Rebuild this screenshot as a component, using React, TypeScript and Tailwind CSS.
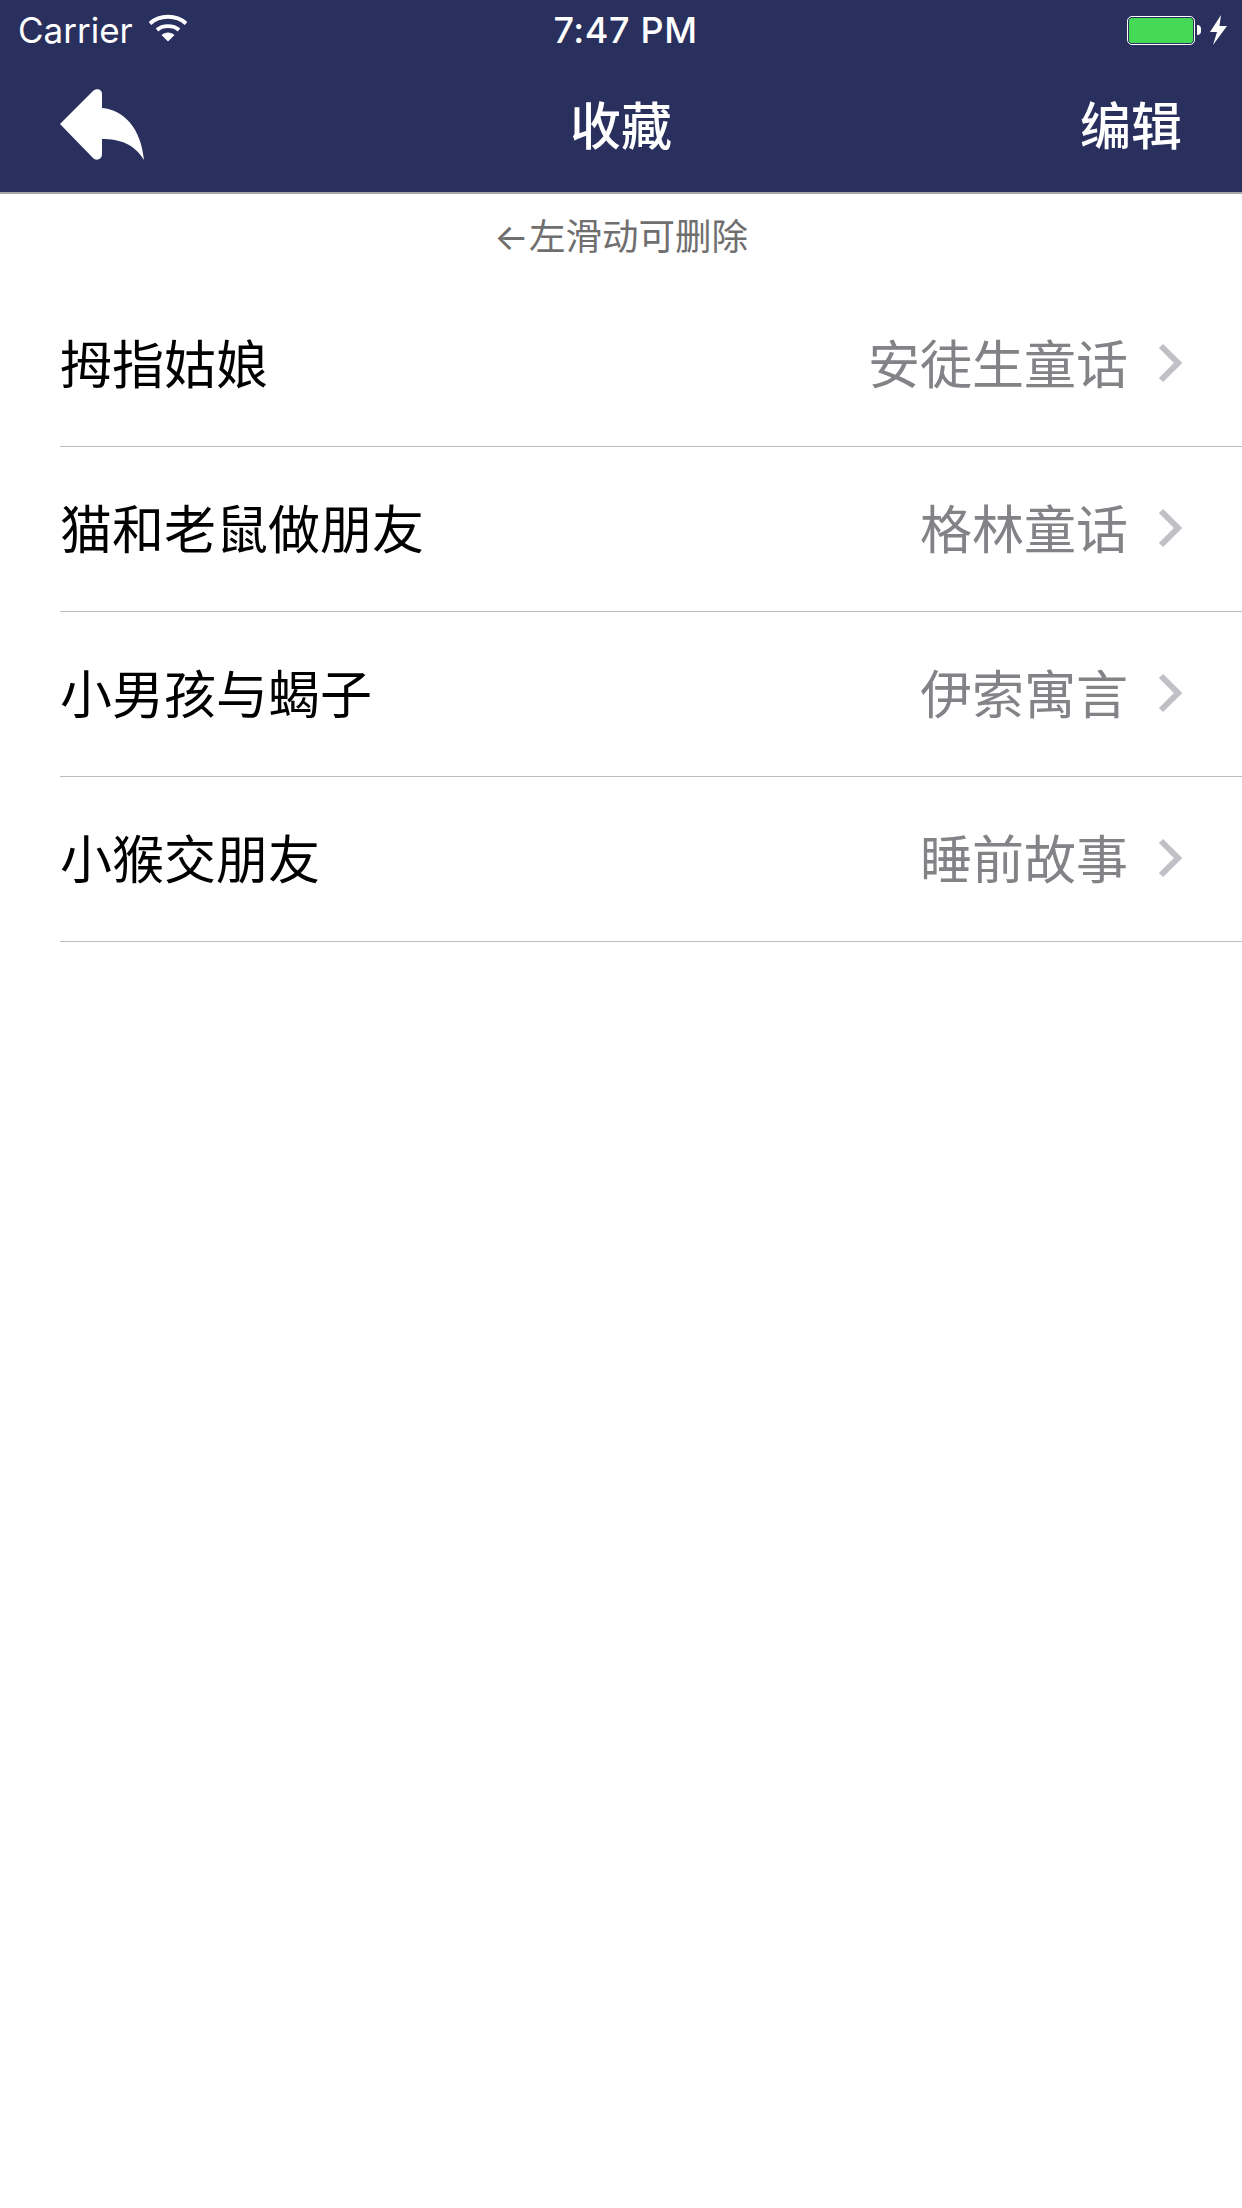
import React from 'react';

const favorites = [
  { title: '拇指姑娘', category: '安徒生童话' },
  { title: '猫和老鼠做朋友', category: '格林童话' },
  { title: '小男孩与蝎子', category: '伊索寓言' },
  { title: '小猴交朋友', category: '睡前故事' },
];

const font = "font-['Inter','Noto_Sans_CJK_SC',sans-serif]";

function StatusBar() {
  return (
    <div className="flex h-[60px] items-center justify-between pl-[18px] pr-[14px] text-white">
      <div className="flex w-[300px] items-center gap-[16px]">
        <span className="text-[35px] leading-none">Carrier</span>
        {/* wifi */}
        <svg width="38" height="28" viewBox="0 0 38 28" className="mb-[5px]">
          <path d="M1 9.5C10.5 0.5 27.5 0.5 37 9.5" fill="none" stroke="white" strokeWidth="3.8" />
          <path d="M8 16C13.5 10.8 24.5 10.8 30 16" fill="none" stroke="white" strokeWidth="3.8" />
          <path d="M12.5 21C16 17.5 22 17.5 25.5 21L19 27.5Z" fill="white" />
        </svg>
      </div>
      <span className="ml-[5px] text-[36px] font-medium leading-none tracking-[0.6px]">7:47 PM</span>
      <div className="flex w-[300px] items-center justify-end">
        <div className="flex h-[29px] w-[68px] items-center justify-center rounded-[5px] border border-white">
          <div className="h-[25px] w-[64px] rounded-[3px] bg-[#44d957]" />
        </div>
        <div className="ml-[2px] h-[10px] w-[4px] rounded-r-[4px] bg-white" />
        {/* charging bolt */}
        <svg width="18" height="30" viewBox="0 0 18 30" className="ml-[9px]">
          <path d="M11 0L0 17H7L3 30L17 11H9.5Z" fill="white" />
        </svg>
      </div>
    </div>
  );
}

function NavBar() {
  return (
    <div className="flex h-[132px] items-center justify-between pl-[60px] pr-[60px] text-white">
      <div className="w-[200px]">
        <svg width="85" height="72" viewBox="0 0 85 72" className="mb-[3px] block">
          <path
            d="M0 35L33 2C36 -1 42 -0.5 42 5V19C64 21 81 39 84 71C74 55 60 50 42 50V65C42 71 36 72 33 69Z"
            fill="white"
          />
        </svg>
      </div>
      <span className="text-[51px] font-medium leading-none">收藏</span>
      <span className="w-[200px] text-right text-[51px] font-medium leading-none">编辑</span>
    </div>
  );
}

function Row({ title, category }: { title: string; category: string }) {
  return (
    <div className="ml-[60px] flex h-[165px] items-center justify-between border-b border-[#bcbbc1] pr-[60px]">
      <span className="pt-[3px] text-[52px] leading-none text-black">{title}</span>
      <div className="flex items-center">
        <span className="pt-[3px] text-[52px] leading-none text-[#828287]">{category}</span>
        <svg width="24" height="40" viewBox="0 0 24 40" className="ml-[30px] mb-[2px]">
          <path d="M3 3L20 20L3 37" fill="none" stroke="#c0c0c6" strokeWidth="6" />
        </svg>
      </div>
    </div>
  );
}

export default function App() {
  return (
    <div className={`h-[2208px] w-[1242px] bg-white ${font}`}>
      <div className="border-b-2 border-[#a8a8ac] bg-[#2a305e]">
        <StatusBar />
        <NavBar />
      </div>
      <div className="flex h-[88px] items-center justify-center pb-[2px] text-[36.5px] leading-none text-[#6f6f6f]">
        ←左滑动可删除
      </div>
      <div>
        {favorites.map((item) => (
          <Row key={item.title} title={item.title} category={item.category} />
        ))}
      </div>
    </div>
  );
}
